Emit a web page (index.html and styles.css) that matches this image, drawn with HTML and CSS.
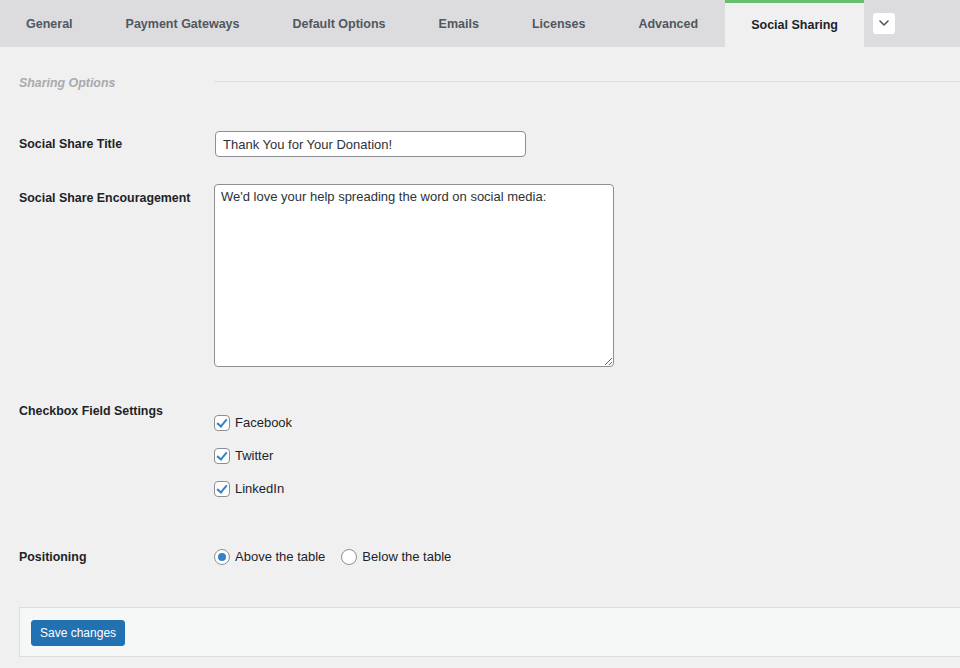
FILE: index.html
```html
<!DOCTYPE html>
<html lang="en">
<head>
  <meta charset="UTF-8">
  <meta name="viewport" content="width=device-width, initial-scale=1.0">
  <title>Settings - Social Sharing</title>
  <link rel="stylesheet" href="styles.css">
</head>
<body>
  <!-- Settings tabs -->
  <nav class="tabs">
    <a href="#" class="tab">General</a>
    <a href="#" class="tab">Payment Gateways</a>
    <a href="#" class="tab">Default Options</a>
    <a href="#" class="tab">Emails</a>
    <a href="#" class="tab">Licenses</a>
    <a href="#" class="tab">Advanced</a>
    <a href="#" class="tab tab-active">Social Sharing</a>
    <button class="tab-more" type="button" aria-label="More tabs">
      <svg width="10" height="6" viewBox="0 0 10 6"><path d="M1 1l4 4 4-4" fill="none" stroke="#50575e" stroke-width="1.6" stroke-linecap="round" stroke-linejoin="round"/></svg>
    </button>
  </nav>

  <form class="settings">
    <div class="row row-section">
      <div class="label section-title">Sharing Options</div>
      <div class="field"><hr class="section-line"></div>
    </div>

    <div class="row row-title">
      <label class="label" for="share-title">Social Share Title</label>
      <div class="field">
        <input id="share-title" class="text-input" type="text" value="Thank You for Your Donation!">
      </div>
    </div>

    <div class="row row-top row-text">
      <label class="label label-top" for="share-text">Social Share Encouragement</label>
      <div class="field">
        <textarea id="share-text" class="text-area">We'd love your help spreading the word on social media:</textarea>
      </div>
    </div>

    <div class="row row-top row-checks">
      <div class="label">Checkbox Field Settings</div>
      <div class="field checks">
        <label class="option"><input type="checkbox" class="check" checked> Facebook</label>
        <label class="option"><input type="checkbox" class="check" checked> Twitter</label>
        <label class="option"><input type="checkbox" class="check" checked> LinkedIn</label>
      </div>
    </div>

    <div class="row row-radio">
      <div class="label">Positioning</div>
      <div class="field radios">
        <label class="option"><input type="radio" name="pos" class="radio" checked> Above the table</label>
        <label class="option"><input type="radio" name="pos" class="radio"> Below the table</label>
      </div>
    </div>

    <div class="submit-bar">
      <button type="button" class="btn-primary">Save changes</button>
    </div>
  </form>
</body>
</html>
```

FILE: styles.css
```css
html, body {
  margin: 0;
  padding: 0;
}
body {
  background: #f0f0f1;
  color: #1d2327;
  font-family: "Liberation Sans", Arial, sans-serif;
  font-size: 13px;
  line-height: 18px;
  overflow: hidden;
}

/* tabs */
.tabs {
  display: flex;
  align-items: center;
  height: 47px;
  background: #dcdcde;
}
.tab {
  display: block;
  height: 47px;
  line-height: 45px;
  padding: 2px 26px 0;
  margin-right: 1px;
  color: #50575e;
  font-size: 12.5px;
  font-weight: 600;
  text-decoration: none;
  box-sizing: border-box;
}
.tab-active {
  background: #f0f0f1;
  color: #1d2327;
  border-top: 3px solid #68c06f;
  padding-top: 0;
  line-height: 44px;
}
.tab-more {
  width: 22px;
  height: 21px;
  margin-left: 8px;
  margin-top: -1px;
  padding: 0;
  border: 0;
  border-radius: 3px;
  background: #fff;
  display: flex;
  align-items: center;
  justify-content: center;
}

/* form rows */
.settings {
  padding-left: 19px;
}
.row {
  display: grid;
  grid-template-columns: 195px 1fr;
  align-items: center;
}
.row-top {
  align-items: start;
}
.label {
  font-size: 12.4px;
  font-weight: 600;
  color: #1d2327;
}
.label-top {
  padding-top: 5px;
}

.row-section {
  margin-top: 27px;
}
.section-title {
  font-style: italic;
  color: #a7aaad;
}
.section-line {
  margin: 0;
  border: 0;
  border-top: 1px solid #dcdcde;
  position: relative;
  top: -2px;
}

.row-title {
  margin-top: 39px;
}
.text-input {
  width: 311px;
  height: 26px;
  box-sizing: border-box;
  margin-left: 1px;
  padding: 0 7px;
  border: 1px solid #8c8f94;
  border-radius: 4px;
  background: #fff;
  color: #2c3338;
  font: inherit;
  font-size: 13px;
}

.row-text {
  margin-top: 27px;
}
.text-area {
  display: block;
  width: 400px;
  height: 183px;
  box-sizing: border-box;
  padding: 3px 6px;
  border: 1px solid #8c8f94;
  border-radius: 4px;
  background: #fff;
  color: #2c3338;
  font: inherit;
  font-size: 13px;
  resize: both;
}

.row-checks {
  margin-top: 35px;
}
.checks {
  padding-top: 12px;
  display: flex;
  flex-direction: column;
  gap: 15px;
}
.option {
  display: flex;
  align-items: center;
  gap: 5px;
  color: #1d2327;
}

.check,
.radio {
  appearance: none;
  -webkit-appearance: none;
  width: 16px;
  height: 16px;
  margin: 0;
  border: 1px solid #8c8f94;
  background: #fff;
  box-sizing: border-box;
  position: relative;
}
.check {
  border-radius: 4px;
}
.check:checked::before {
  content: '';
  position: absolute;
  left: 4px;
  top: 1px;
  width: 4px;
  height: 8px;
  border: solid #3582c4;
  border-width: 0 2px 2px 0;
  transform: rotate(40deg);
}
.radio {
  border-radius: 50%;
}
.radio:checked::before {
  content: '';
  position: absolute;
  left: 3px;
  top: 3px;
  width: 8px;
  height: 8px;
  border-radius: 50%;
  background: #3582c4;
}

.row-radio {
  margin-top: 50px;
}
.radios {
  display: flex;
  gap: 16px;
}

/* submit */
.submit-bar {
  margin-top: 41px;
  margin-right: -20px;
  height: 50px;
  box-sizing: border-box;
  padding: 12px 11px;
  border: 1px solid #dcdcde;
  background: #f6f7f7;
}
.btn-primary {
  height: 26px;
  padding: 0 8px;
  border: 1px solid #2271b1;
  border-radius: 3px;
  background: #2271b1;
  color: #fff;
  font: inherit;
  font-size: 12px;
}
```
